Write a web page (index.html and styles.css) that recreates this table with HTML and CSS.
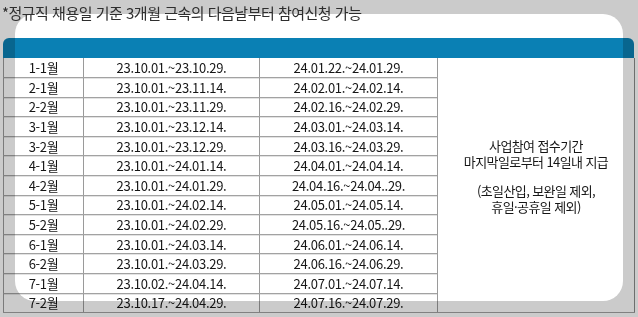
FILE: index.html
```html
<!DOCTYPE html>
<html lang="ko">
<head>
<meta charset="utf-8">
<title>참여신청 일정</title>
<link rel="stylesheet" href="styles.css">
</head>
<body>
<div class="page">
  <div class="card"></div>
  <p class="note">*정규직 채용일 기준 3개월 근속의 다음날부터 참여신청 가능</p>
  <div class="sheet">
    <div class="sheet-head"></div>
    <table class="schedule">
      <colgroup>
        <col class="c1"><col class="c2"><col class="c3"><col class="c4">
      </colgroup>
      <tbody>
        <tr><td>1-1월</td><td>23.10.01.~23.10.29.</td><td>24.01.22.~24.01.29.</td>
          <td class="memo" rowspan="13"><span class="memo-line">사업참여 접수기간</span><span class="memo-line">마지막일로부터 14일내 지급</span><span class="memo-gap"></span><span class="memo-line">(초일산입, 보완일 제외,</span><span class="memo-line">휴일·공휴일 제외)</span></td></tr>
        <tr><td>2-1월</td><td>23.10.01.~23.11.14.</td><td>24.02.01.~24.02.14.</td></tr>
        <tr><td>2-2월</td><td>23.10.01.~23.11.29.</td><td>24.02.16.~24.02.29.</td></tr>
        <tr><td>3-1월</td><td>23.10.01.~23.12.14.</td><td>24.03.01.~24.03.14.</td></tr>
        <tr><td>3-2월</td><td>23.10.01.~23.12.29.</td><td>24.03.16.~24.03.29.</td></tr>
        <tr><td>4-1월</td><td>23.10.01.~24.01.14.</td><td>24.04.01.~24.04.14.</td></tr>
        <tr><td>4-2월</td><td>23.10.01.~24.01.29.</td><td>24.04.16.~24.04..29.</td></tr>
        <tr><td>5-1월</td><td>23.10.01.~24.02.14.</td><td>24.05.01.~24.05.14.</td></tr>
        <tr><td>5-2월</td><td>23.10.01.~24.02.29.</td><td>24.05.16.~24.05..29.</td></tr>
        <tr><td>6-1월</td><td>23.10.01.~24.03.14.</td><td>24.06.01.~24.06.14.</td></tr>
        <tr><td>6-2월</td><td>23.10.01.~24.03.29.</td><td>24.06.16.~24.06.29.</td></tr>
        <tr><td>7-1월</td><td>23.10.02.~24.04.14.</td><td>24.07.01.~24.07.14.</td></tr>
        <tr><td>7-2월</td><td>23.10.17.~24.04.29.</td><td>24.07.16.~24.07.29.</td></tr>
      </tbody>
    </table>
  </div>
</div>
</body>
</html>
```

FILE: styles.css
```css
html, body {
  margin: 0;
  padding: 0;
}
body {
  background: #cbcbcb;
  width: 638px;
  height: 317px;
  overflow: hidden;
  font-family: "Noto Sans CJK KR", "Noto Sans", sans-serif;
  color: #161616;
}
.page {
  display: grid;
  grid-template-columns: 638px;
  align-items: start;
}
.page > * {
  grid-area: 1 / 1;
}
.card {
  margin: 14px 0 0 15px;
  width: 608px;
  height: 287px;
  background: #ffffff;
  border-radius: 20px;
}
.note {
  margin: 2px 0 0 2px;
  font-size: 15px;
  line-height: 22px;
  letter-spacing: -0.5px;
  color: #2e2e2e;
  white-space: nowrap;
}
.sheet {
  margin: 38px 0 0 3px;
  width: 631px;
  mix-blend-mode: multiply;
}
.sheet-head {
  height: 20px;
  background: #0a80b4;
  border-radius: 6px 6px 0 0;
}
.schedule {
  width: 631px;
  border-collapse: collapse;
  table-layout: fixed;
  border: 1px solid #8a8a8a;
  border-top: none;
  font-size: 13px;
  letter-spacing: -0.3px;
}
.c1 { width: 80px; }
.c2 { width: 176px; }
.c3 { width: 178px; }
.c4 { width: 197px; }
.schedule tr {
  height: 19.6px;
}
.schedule td {
  padding: 0;
  text-align: center;
  vertical-align: middle;
  line-height: 15px;
  border-left: 1px solid #9a9a9a;
  border-bottom: 1px solid #a2a2a2;
  box-shadow: inset 0 1px 0 #e3e3e3;
  white-space: nowrap;
}
.schedule tr:first-child td {
  box-shadow: none;
}
.schedule td.memo {
  box-shadow: none;
  padding-bottom: 18px;
  letter-spacing: -0.6px;
}
.memo-line {
  display: block;
  line-height: 15.5px;
}
.memo-gap {
  display: block;
  height: 14px;
}
```
